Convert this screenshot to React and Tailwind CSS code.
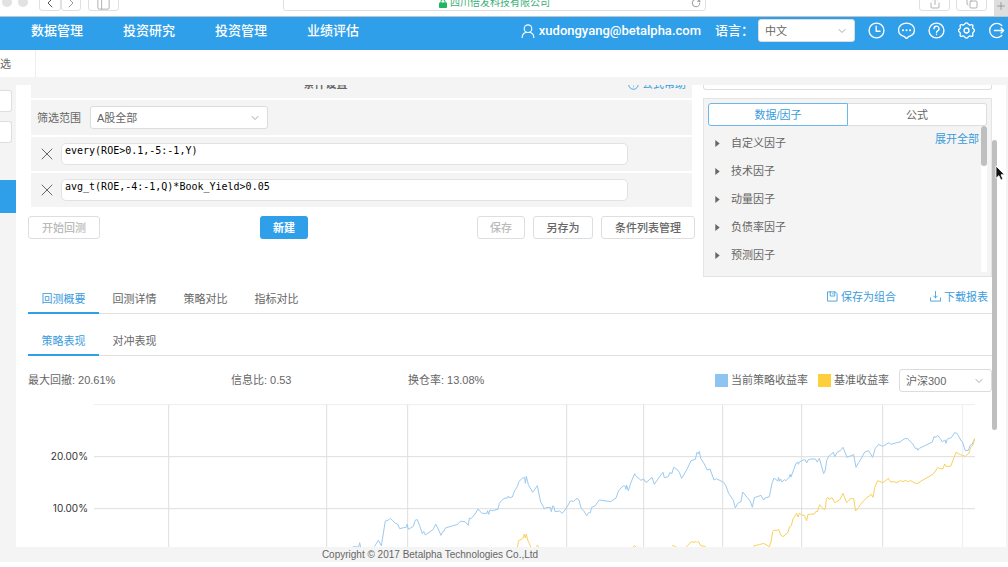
import { ChevronDown, ChevronLeft, ChevronRight, Copy, PanelLeft, Plus, RotateCw, Share, X } from "lucide-react";

const NAV = ["数据管理", "投资研究", "投资管理", "业绩评估"];

const CONDITIONS = ["every(ROE>0.1,-5:-1,Y)", "avg_t(ROE,-4:-1,Q)*Book_Yield>0.05"];

const FACTORS = ["自定义因子", "技术因子", "动量因子", "负债率因子", "预测因子"];

const RESULT_TABS = ["回测概要", "回测详情", "策略对比", "指标对比"];

const STATS = [
  { label: "最大回撤", value: "20.61%" },
  { label: "信息比", value: "0.53" },
  { label: "换仓率", value: "13.08%" },
];

const GRID_X = [-502, -28, 215, 692, 923, 1160, 1397, 1640];

const STRATEGY = [
  "50,561 54,560 68,561 71,548 74,562",
  "115,560 127,541 136,557 148,483 158,480 163,475 170,482 178,490 185,492 191,506 212,501 213,492 217,508 232,499 238,480 244,479 252,500 259,521 263,514 268,525 292,508 299,492 308,510 315,526 320,515 324,514 328,504 365,493 373,484 387,485 397,496 400,474 405,476 417,462 426,447 431,453 439,460 453,460 455,452 458,463 462,450 470,452 480,449 486,448 490,430 497,421 507,414 515,414 517,408 520,413 529,411 536,392 544,380 549,364 560,354 566,353 568,370 571,349 577,374 590,397 604,377 614,426 622,440 625,447 630,443 643,442 646,455 650,438 654,440 657,455 671,453 679,460 690,446 703,423 713,424 723,415 729,420 736,446 743,452 752,467 758,458 763,458 767,442 777,438 790,420 824,425 840,414 848,392 862,377 868,379 870,388 872,376 877,392 885,367 896,341 899,347 915,361 923,357 930,368 948,352 955,373 968,354 981,337 985,353 997,350 1001,338 1008,340 1013,322 1022,327 1030,337 1037,355 1053,328 1065,302 1078,298 1083,277 1087,282 1090,274 1094,295 1105,312 1114,330 1122,327 1134,360 1141,356 1163,367 1170,378 1178,400 1192,421 1198,444 1205,430 1215,425 1220,396 1234,413 1243,424 1249,442 1255,413 1275,406 1283,420 1287,414 1300,410 1308,370 1314,354 1325,363 1328,352 1330,364 1334,357 1338,366 1345,359 1350,362 1360,351 1362,343 1365,351 1380,310 1385,306 1387,313 1390,306 1404,299 1408,300 1412,309 1416,300 1424,297 1438,297 1444,306 1450,295 1463,341 1468,330 1472,301 1478,289 1492,277 1496,290 1504,276 1513,272 1521,262 1533,292 1553,284 1560,322 1568,308 1575,297 1586,276 1598,272 1610,292 1618,265 1628,253 1640,259 1659,248 1665,253 1678,249 1692,246 1706,236 1715,236 1730,252 1739,266 1743,264 1746,271 1750,265 1789,246 1794,230 1800,232 1805,226 1812,235 1819,245 1827,240 1830,250 1834,237 1846,233 1856,218 1863,220 1876,243 1879,245 1888,272 1897,271 1903,255 1909,252 1915,238",
];

const BENCHMARK = [
  "544,561 548,542 560,536 565,522 568,534 571,523 575,540 585,562",
  "600,560 605,556 608,562",
  "890,561 896,557 901,562",
  "1008,558 1012,556 1020,561",
  "1050,562 1066,545 1074,547 1080,544 1084,548 1088,545 1094,557 1106,559 1112,563",
  "1254,562 1255,557 1270,554 1283,550 1300,560 1305,546 1310,515 1314,511 1324,511 1328,508 1334,525 1341,530 1356,517 1361,500 1366,497 1371,477 1382,460 1386,471 1390,460 1396,465 1405,466 1412,482 1416,463 1435,462 1441,453 1444,456 1451,434 1464,449 1468,447 1471,418 1475,412 1479,418 1488,413 1496,428 1511,420 1521,400 1532,428 1543,416 1553,416 1559,453 1568,442 1573,434 1588,417 1606,403 1611,412 1616,383 1625,362 1641,368 1657,355 1664,366 1673,365 1682,368 1693,362 1701,365 1708,361 1715,365 1724,362 1738,370 1746,370 1752,365 1791,343 1806,322 1811,326 1821,326 1826,312 1830,319 1844,319 1854,293 1860,277 1873,284 1888,289 1899,279 1904,262 1910,257 1916,235",
];

const HEADER_ICONS = [
  {
    label: "历史",
    art: (
      <>
        <circle cx="12" cy="12" r="10.5" />
        <path d="M11.5 6v7H17" />
      </>
    ),
  },
  {
    label: "消息",
    art: (
      <>
        <path d="M12 23.500l-3-3C4 19 .8 15.500 .8 11.500.8 5.500 5.800 1.500 12 1.500s11.200 4 11.200 10c0 4-3.200 7.500-8.200 9z" />
        <path d="M7 11.500h.1M12 11.500h.1M17 11.500h.1" strokeWidth="2.800" />
      </>
    ),
  },
  {
    label: "帮助",
    art: (
      <>
        <circle cx="12" cy="12" r="10.500" />
        <path d="M8.500 9.500a3.500 3.500 0 1 1 5 3.100c-1 .5-1.500 1-1.500 2.400M12 17.500v.1" />
      </>
    ),
  },
  {
    label: "设置",
    art: (
      <>
        <path d="M12 1.200c2 0 2.300 2.500 4 3 1.600.4 3.300-1.300 4.600 0s-.3 2.800.2 4.300c.5 1.300 2.500 1.800 2.500 3.500s-2 2.200-2.500 3.500c-.5 1.500 1 3 -.2 4.300s-3-.4-4.600 0c-1.700.5-2 3-4 3s-2.300-2.500-4-3c-1.600-.4-3.300 1.300-4.600 0s.3-2.800-.2-4.300c-.5-1.300-2.500-1.800-2.500-3.500s2-2.200 2.500-3.500c.5-1.500-1-3 .2-4.300s3 .4 4.600 0c1.700-.5 2-3 4-3z" />
        <circle cx="12" cy="12" r="3.500" />
      </>
    ),
  },
  {
    label: "退出",
    art: <path d="M19.500 5A10 10 0 1 0 19.500 19M9 12h13M18.500 8.500L22 12l-3.500 3.500" />,
  },
];

function LineIcon({ className, children }) {
  return (
    <svg viewBox="0 0 24 24" className={className} fill="none" stroke="currentColor" strokeWidth="1.9" strokeLinecap="round" strokeLinejoin="round" aria-hidden="true">
      {children}
    </svg>
  );
}

function Select({ label, options, className }) {
  return (
    <div className={`relative h-[23px] ${className}`}>
      <select
        aria-label={label}
        className="block w-full h-full appearance-none rounded-[3px] border border-[#dcdcdc] bg-white pl-1.5 pr-5 text-[#666] outline-none"
      >
        {options.map((o) => (
          <option key={o}>{o}</option>
        ))}
      </select>
      <ChevronDown className="pointer-events-none absolute right-[7px] top-1.5 size-3 text-[#888]" strokeWidth={1.5} />
    </div>
  );
}

function BrowserBar() {
  const box = "flex items-center justify-center h-4 rounded-[3px] border border-[#e0e0e0]";
  return (
    <div className="flex h-4 items-end overflow-hidden bg-white pb-[5px] pl-0.5 text-[#999]">
      <span className="mb-1 size-[10px] rounded-full bg-[#e2e2e2]" />
      <span className="mb-1 ml-1.5 size-[10px] rounded-full bg-[#e2e2e2]" />
      <button aria-label="后退" className={`${box} ml-[11px] w-[22px] text-[#555]`}>
        <ChevronLeft className="size-4 shrink-0" strokeWidth={1.5} />
      </button>
      <button aria-label="前进" className={`${box} w-5`}>
        <ChevronRight className="size-4 shrink-0" strokeWidth={1.5} />
      </button>
      <button aria-label="边栏" className={`${box} ml-[7px] w-[31px]`}>
        <PanelLeft className="size-[15px] shrink-0" strokeWidth={1.2} />
      </button>
      <div className={`${box} relative ml-[164px] mr-[213px] flex-1 gap-[3px] text-[10px]`}>
        <svg viewBox="0 0 8 9" className="h-[9px] w-2" aria-hidden="true">
          <rect y="3.500" width="8" height="5.500" rx="0.800" fill="#22b45e" />
          <path d="M2 4V2.500a2 2 0 0 1 4 0V4" fill="none" stroke="#22b45e" />
        </svg>
        <span className="leading-4 text-[#38ae75]">四川倍发科技有限公司</span>
        <RotateCw className="absolute right-1 size-[10px] text-[#888]" strokeWidth={2} />
      </div>
      <button aria-label="分享" className={`${box} w-[31px]`}>
        <Share className="size-3 shrink-0" strokeWidth={1.5} />
      </button>
      <button aria-label="标签页" className={`${box} ml-1.5 w-[31px]`}>
        <Copy className="size-3 shrink-0" strokeWidth={1.5} />
      </button>
      <button aria-label="新标签页" className="-mb-[5px] ml-[7px] flex h-5 w-[14px] items-center justify-center bg-[#dedede] text-[#888]">
        <Plus className="size-3" strokeWidth={1.5} />
      </button>
    </div>
  );
}

function Header() {
  return (
    <header className="flex h-[34px] items-center border-t border-[#bcc6cc] bg-[#2f9fe9] pb-1.5 pl-[31px] pr-[3px] text-[13px] font-medium text-white">
      <nav className="flex gap-10">
        {NAV.map((n) => (
          <a key={n} href="#">{n}</a>
        ))}
      </nav>
      <div className="ml-auto flex items-center">
        <LineIcon className="mr-1 size-[14px]">
          <circle cx="12" cy="8" r="6.500" />
          <path d="M2 23c0-5 3-8 7-9M22 23c0-5-3-8-7-9" />
        </LineIcon>
        <span className="mr-[14px] font-[Roboto,sans-serif]">xudongyang@betalpha.com</span>
        <span className="mr-1">语言：</span>
        <Select label="语言" options={["中文", "English"]} className="mr-[13px] w-[97px] text-[11px] font-normal" />
        <div className="flex gap-[13px]">
          {HEADER_ICONS.map((i) => (
            <button key={i.label} aria-label={i.label}>
              <LineIcon className="size-[17px]">{i.art}</LineIcon>
            </button>
          ))}
        </div>
      </div>
    </header>
  );
}

function Conditions() {
  const button = "h-[23px] rounded-[3px] border border-[#dedede] bg-white font-medium";
  return (
    <section className="min-w-0 flex-1">
      <div className="ml-[3px] mr-[3px] flex flex-col gap-0.5">
        <div className="-mt-[15px] flex h-7 items-center bg-[#f4f4f4] pr-1.5">
          <h2 className="flex-1 pr-2 text-center font-bold">条件设置</h2>
          <a href="#" className="flex items-center gap-[3px] text-[#3a9cdc]">
            <LineIcon className="size-[11px]">
              <circle cx="12" cy="12" r="10.500" />
              <path d="M12 7v6M12 17v.1" />
            </LineIcon>
            公式帮助
          </a>
        </div>
        <div className="flex h-[35px] items-center gap-[9px] bg-[#f4f4f4] pl-1.5">
          <span>筛选范围</span>
          <Select label="筛选范围" options={["A股全部", "沪深300"]} className="w-[178px]" />
        </div>
        {CONDITIONS.map((c) => (
          <div key={c} className="flex h-[34px] items-center gap-1 bg-[#f4f4f4] pl-1.5 pr-16">
            <button aria-label="删除条件">
              <X className="size-5" strokeWidth={1.2} />
            </button>
            <textarea
              aria-label="条件"
              rows={1}
              spellCheck={false}
              defaultValue={c}
              className="block h-[22px] flex-1 resize-none overflow-hidden rounded-[5px] border border-[#e2e2e2] bg-white px-[3px] font-['DejaVu_Sans_Mono',monospace] text-[10px] leading-[14px] text-black outline-none"
            />
          </div>
        ))}
      </div>
      <div className="mt-[9px] flex">
        <button disabled className={`${button} w-[72px] text-[#bbb]`}>开始回测</button>
        <button className="ml-40 h-[23px] w-12 rounded-[3px] bg-[#2f9fe9] font-bold text-white">新建</button>
        <div className="ml-auto flex gap-2">
          <button disabled className={`${button} w-12 text-[#bbb]`}>保存</button>
          <button className={`${button} w-[60px]`}>另存为</button>
          <button className={`${button} w-[94px]`}>条件列表管理</button>
        </div>
      </div>
    </section>
  );
}

function FactorPanel() {
  return (
    <aside className="flex w-[289px] flex-col gap-2">
      <div className="h-[5px] rounded-b-[3px] border border-t-0 border-[#dedede]" />
      <div className="border border-[#e4e4e4] bg-[#f4f4f4] p-1">
        <div className="flex h-[23px]">
          <button className="flex-1 rounded-l-[3px] border border-[#6bb8ec] bg-white text-[#3a9cdc]">数据/因子</button>
          <button className="flex-1 rounded-r-[3px] border border-l-0 border-[#dedede] bg-white">公式</button>
        </div>
        <div className="flex">
          <ul className="flex-1 pb-[3px] pt-[3px]">
            {FACTORS.map((f) => (
              <li key={f} className="flex h-7 items-center gap-[11px] pl-[7px]">
                <svg viewBox="0 0 5 8" className="h-[7px] w-[5px]" aria-hidden="true">
                  <path d="M0 0l5 4-5 4z" fill="#666" />
                </svg>
                {f}
              </li>
            ))}
          </ul>
          <a href="#" className="mr-0.5 mt-[5px] text-[#3a9cdc]">展开全部</a>
          <div className="w-1.5 bg-white">
            <div className="h-10 rounded-full bg-[#bfbfbf]" />
          </div>
        </div>
      </div>
    </aside>
  );
}

function Tabs({ items, children }) {
  return (
    <div className="flex h-[34px] border-b border-[#e0e0e0]">
      {items.map((t, i) => (
        <button
          key={t}
          className={`-mb-px w-[71px] border-b-2 pt-1.5 ${i === 0 ? "border-[#2f9fe9] text-[#3a9cdc]" : "border-transparent"}`}
        >
          {t}
        </button>
      ))}
      {children}
    </div>
  );
}

function Chart() {
  return (
    <svg viewBox="-924 120 2892 441" className="block w-full" role="img" aria-label="策略收益率">
      <path d="M-726 134H1917M1880 134V561" stroke="#eee" strokeWidth="3" />
      <path d="M-726 290H1917M-726 446H1917" stroke="#dedede" strokeWidth="3" />
      {GRID_X.map((x) => (
        <path key={x} d={`M${x} 134V561`} stroke="#dedede" strokeWidth="3" />
      ))}
      <g fontSize="30" textAnchor="end" fill="#333" fontFamily="Inter, sans-serif">
        <text x="-744" y="301">20.00%</text>
        <text x="-744" y="457">10.00%</text>
      </g>
      <g fill="none" strokeWidth="3" strokeLinejoin="round">
        {STRATEGY.map((p) => (
          <polyline key={p} points={p} stroke="#9ccaee" />
        ))}
        {BENCHMARK.map((p) => (
          <polyline key={p} points={p} stroke="#f8d15c" />
        ))}
      </g>
    </svg>
  );
}

function Results() {
  return (
    <section>
      <Tabs items={RESULT_TABS}>
        <div className="ml-auto flex items-center gap-[34px] pr-1 text-[#3a9cdc]">
          <a href="#" className="flex items-center gap-[3px]">
            <LineIcon className="size-[11px]">
              <path d="M2 2h16l4 4v16H2zM7 2v9h10V2M13 5v2" />
            </LineIcon>
            保存为组合
          </a>
          <a href="#" className="flex items-center gap-[3px]">
            <LineIcon className="size-[11px]">
              <path d="M12 1v14M8 11l4 4 4-4M1 15v7h22v-7" />
            </LineIcon>
            下载报表
          </a>
        </div>
      </Tabs>
      <div className="mt-2">
        <Tabs items={["策略表现", "对冲表现"]} />
      </div>
      <div className="mt-[13px] flex items-start">
        <dl className="mt-[3px] grid flex-1 grid-cols-[203px_177px_1fr]">
          {STATS.map((s) => (
            <div key={s.label} className="flex gap-[3px]">
              <dt>{s.label}:</dt>
              <dd>{s.value}</dd>
            </div>
          ))}
        </dl>
        <div className="mr-2.5 mt-[3px] flex items-center gap-[3px]">
          <span className="size-[13px] bg-[#8ec5f0]" />
          当前策略收益率
        </div>
        <div className="mr-2.5 mt-[3px] flex items-center gap-[3px]">
          <span className="size-[13px] bg-[#fdcf3c]" />
          基准收益率
        </div>
        <Select label="基准" options={["沪深300", "中证500"]} className="w-[93px]" />
      </div>
      <div className="mt-2">
        <Chart />
      </div>
    </section>
  );
}

export default function App() {
  return (
    <div className="flex h-screen flex-col overflow-hidden bg-white font-['Liberation_Sans','Noto_Sans_CJK_SC',sans-serif] text-[11px] leading-4 text-[#666]">
      <BrowserBar />
      <Header />
      <div className="flex h-[27px] shrink-0">
        <div className="flex w-9 items-center border-r border-[#eee]">选</div>
      </div>
      <div className="flex min-h-0 flex-1 bg-[#f4f4f4] pr-0.5 pt-2">
        <div className="flex w-4 shrink-0 flex-col pt-[5px]">
          <div className="mr-1 h-[22px] rounded-r-[3px] border border-l-0 border-[#dedede] bg-white" />
          <div className="mr-1 mt-[9px] h-[22px] rounded-r-[3px] border border-l-0 border-[#dedede] bg-white" />
          <div className="mt-[37px] h-[33px] bg-[#2f9fe9]" />
        </div>
        <main className="min-w-0 flex-1 overflow-hidden bg-white pl-3">
          <div className="flex gap-2">
            <Conditions />
            <FactorPanel />
          </div>
          <div className="mt-[3px]">
            <Results />
          </div>
        </main>
        <div className="relative w-[14px] shrink-0 bg-white pt-[55px]">
          <div className="h-[290px] w-[5px] rounded-full bg-[#bfbfbf]" />
          <svg viewBox="0 0 12 18" className="absolute left-0.5 top-20 h-4 w-[11px]" aria-hidden="true">
            <path d="M2 1v14l3.300-3 2.200 5 2.400-1-2.200-5h4z" fill="#111" stroke="#fff" />
          </svg>
        </div>
      </div>
      <footer className="shrink-0 bg-[#f4f4f4] pr-[148px] text-center text-[10px] leading-[15px]">
        Copyright © 2017 Betalpha Technologies Co.,Ltd
      </footer>
      <div className="h-[5px] shrink-0 bg-white" />
    </div>
  );
}
